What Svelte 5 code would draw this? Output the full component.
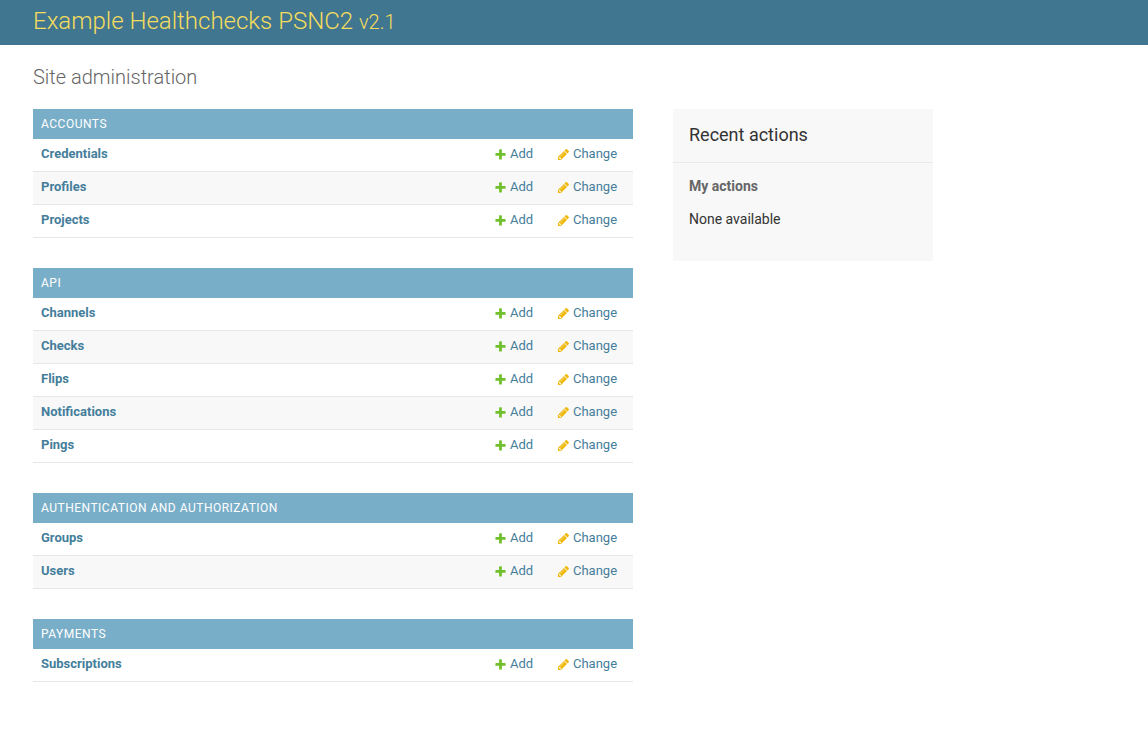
<script>
  const apps = [
    { name: 'Accounts', models: ['Credentials', 'Profiles', 'Projects'] },
    { name: 'API', models: ['Channels', 'Checks', 'Flips', 'Notifications', 'Pings'] },
    { name: 'Authentication and Authorization', models: ['Groups', 'Users'] },
    { name: 'Payments', models: ['Subscriptions'] }
  ];
</script>

<header>
  <div class="brand">Example Healthchecks PSNC2 <small>v2.1</small></div>
</header>
<div class="content">
  <h1>Site administration</h1>
  <div class="columns">
    <main>
      {#each apps as app}
        <section>
          <h2>{app.name}</h2>
          {#each app.models as model}
            <div class="row">
              <span class="model">{model}</span>
              <span class="link add">
                <svg viewBox="0 0 1792 1792" width="13" height="13"><path fill="#70bf2b" d="M1600 796v192q0 40-28 68t-68 28h-416v416q0 40-28 68t-68 28h-192q-40 0-68-28t-28-68v-416h-416q-40 0-68-28t-28-68v-192q0-40 28-68t68-28h416v-416q0-40 28-68t68-28h192q40 0 68 28t28 68v416h416q40 0 68 28t28 68z" /></svg>
                Add
              </span>
              <span class="link change">
                <svg viewBox="0 0 1792 1792" width="13" height="13"><path fill="#efb80b" d="M491 1536l91-91-235-235-91 91v107h128v128h107zm523-928q0-22-22-22-10 0-17 7l-542 542q-7 7-7 17 0 22 22 22 10 0 17-7l542-542q7-7 7-17zm-54-192l416 416-832 832h-416v-416zm683 96q0 53-37 90l-166 166-416-416 166-165q36-38 90-38 53 0 91 38l235 234q37 39 37 91z" /></svg>
                Change
              </span>
            </div>
          {/each}
        </section>
      {/each}
    </main>
    <aside>
      <h2>Recent actions</h2>
      <h3>My actions</h3>
      <p>None available</p>
    </aside>
  </div>
</div>

<style>
  :global(body) {
    background: #fff;
    color: #333;
    font: 13px/13px Roboto, sans-serif;
  }
  header {
    height: 45px;
    box-sizing: border-box;
    padding: 6px 33px 0;
    background: #417690;
  }
  .brand {
    color: #f5dd5d;
    font-size: 24px;
    line-height: 30px;
    font-weight: 300;
  }
  small { font-size: 20px; }
  .content { padding: 20px 33px; }
  h1 {
    margin: 0 0 20px;
    font-size: 20px;
    line-height: 24px;
    font-weight: 300;
    color: #666;
  }
  .columns { display: flex; gap: 40px; align-items: flex-start; }
  main { width: 600px; }
  section { margin-bottom: 30px; }
  section h2 {
    margin: 0;
    padding: 8px;
    height: 14px;
    line-height: 14px;
    background: #79aec8;
    color: #fff;
    font-size: 12px;
    font-weight: 400;
    letter-spacing: 0.5px;
    text-transform: uppercase;
  }
  .row {
    display: flex;
    padding: 8px 16px 0 8px;
    height: 24px;
    line-height: 14px;
    border-bottom: 1px solid #e6e6e6;
    color: #447e9b;
  }
  .row:nth-of-type(even) { background: #f8f8f8; }
  .model { flex: 1; font-weight: 700; }
  .link { display: flex; gap: 3px; flex: none; }
  .link svg { margin-top: 1px; flex: none; }
  .add { width: 40px; }
  .change { width: 60px; margin-left: 23px; }
  aside { width: 260px; height: 152px; background: #f8f8f8; }
  aside h2 {
    margin: 0 0 15px;
    padding: 15px 16px 17px;
    font-size: 18px;
    line-height: 21px;
    font-weight: 400;
    border-bottom: 1px solid #eaeaea;
  }
  aside h3 {
    margin: 0 16px 17px;
    font-size: 14px;
    line-height: 16px;
    font-weight: 700;
    color: #666;
  }
  aside p { margin: 0 16px; font-size: 14px; line-height: 16px; }
</style>
